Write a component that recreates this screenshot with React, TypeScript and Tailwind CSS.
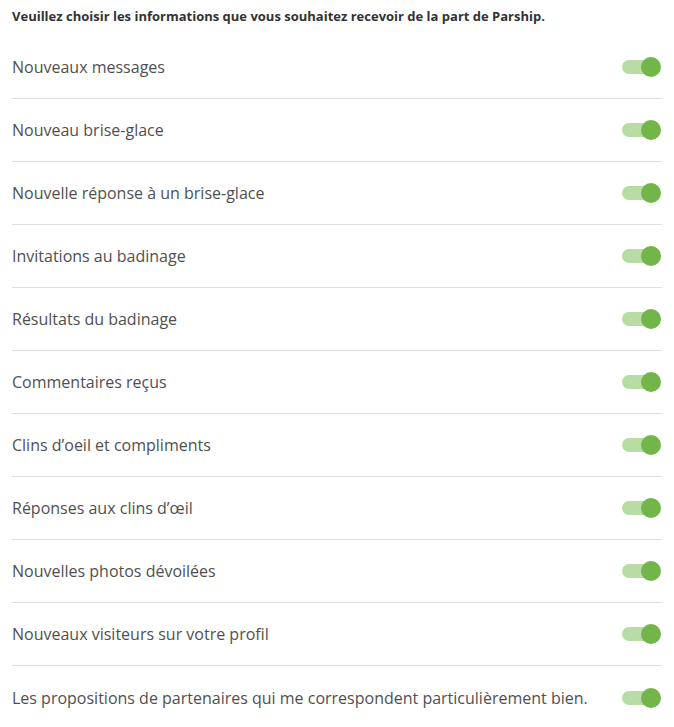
import React from "react";

const ITEMS = [
  "Nouveaux messages",
  "Nouveau brise-glace",
  "Nouvelle réponse à un brise-glace",
  "Invitations au badinage",
  "Résultats du badinage",
  "Commentaires reçus",
  "Clins d’oeil et compliments",
  "Réponses aux clins d’œil",
  "Nouvelles photos dévoilées",
  "Nouveaux visiteurs sur votre profil",
  "Les propositions de partenaires qui me correspondent particulièrement bien.",
];

const Toggle: React.FC = () => (
  <div className="relative w-[39px] h-[20px] shrink-0 mr-[1px]">
    <div className="absolute left-0 right-[6px] top-[3px] h-[14px] rounded-full bg-[#b8dca4]" />
    <div className="absolute right-0 top-0 w-[20px] h-[20px] rounded-full bg-[#72b548]" />
  </div>
);

export default function App() {
  return (
    <div className="bg-white px-3 pt-[7px] font-['Open_Sans',sans-serif]">
      <p className="text-[13px] leading-[18px] font-bold text-[#333] mb-[11px]">
        Veuillez choisir les informations que vous souhaitez recevoir de la part de Parship.
      </p>
      <div className="flex flex-col">
        {ITEMS.map((label, i) => (
          <div
            key={label}
            className={`flex items-center justify-between h-[63px] ${
              i < ITEMS.length - 1 ? "border-b border-[#e0e0e0]" : ""
            }`}
          >
            <span className="text-[16px] text-[#505050]">{label}</span>
            <Toggle />
          </div>
        ))}
      </div>
    </div>
  );
}
